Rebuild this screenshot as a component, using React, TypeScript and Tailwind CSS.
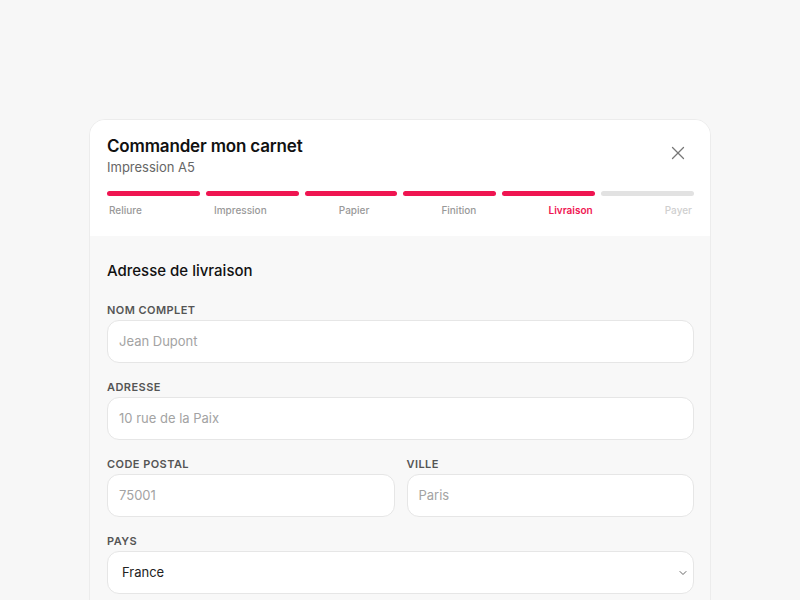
import { X, ChevronDown } from 'lucide-react';

const STEPS = ['Reliure', 'Impression', 'Papier', 'Finition', 'Livraison', 'Payer'];
const CURRENT = 4;

function Field({ label, placeholder }: { label: string; placeholder: string }) {
  return (
    <div className="flex flex-col">
      <label className="text-[11px] font-semibold tracking-[0.04em] text-[#555] leading-[14px] mb-[3px]">
        {label}
      </label>
      <div className="h-[43px] rounded-xl border border-[#e6e6e6] bg-white flex items-center pl-[11px]">
        <span className="text-[13px] text-[#a3a3a3]">{placeholder}</span>
      </div>
    </div>
  );
}

export default function App() {
  return (
    <div
      className="h-[600px] overflow-hidden bg-[#f7f7f7] pt-[119px] flex justify-center"
      style={{ fontFamily: 'Inter, "Noto Sans", sans-serif' }}
    >
      <div className="w-[622px] rounded-t-2xl border border-[#ececec] bg-[#f8f8f8] overflow-hidden self-start h-[520px]">
        {/* Header */}
        <div className="bg-white pl-[17px] pr-[16px] pt-[14px] pb-[19px]">
          <div className="flex justify-between items-start">
            <div>
              <h1 className="text-[17px] font-semibold text-[#111] leading-6 tracking-[-0.01em]">Commander mon carnet</h1>
              <p className="text-[13px] text-[#666] leading-5 -mt-[1px]">Impression A5</p>
            </div>
            <button className="mt-[8px] mr-[5px] text-[#777]">
              <X size={22} strokeWidth={1.4} />
            </button>
          </div>
          <div className="flex gap-[6px] mt-[14px]">
            {STEPS.map((s, i) => (
              <div
                key={s}
                className={`flex-1 h-[5px] rounded-full ${i <= CURRENT ? 'bg-[#ef1551]' : 'bg-[#e2e2e2]'}`}
              />
            ))}
          </div>
          <div className="flex justify-between px-[2px] mt-[7px]">
            {STEPS.map((s, i) => (
              <span
                key={s}
                className={`text-[10px] font-medium leading-[14px] ${
                  i === CURRENT ? 'text-[#ef1551] font-semibold' : i > CURRENT ? 'text-[#cfcfcf]' : 'text-[#999]'
                }`}
              >
                {s}
              </span>
            ))}
          </div>
        </div>

        {/* Body */}
        <div className="pl-[17px] pr-[16px] pt-[25px]">
          <h2 className="text-[15px] font-medium text-[#111] leading-5 mb-[22px]">Adresse de livraison</h2>
          <div className="flex flex-col gap-[17px]">
            <Field label="NOM COMPLET" placeholder="Jean Dupont" />
            <Field label="ADRESSE" placeholder="10 rue de la Paix" />
            <div className="grid grid-cols-2 gap-3">
              <Field label="CODE POSTAL" placeholder="75001" />
              <Field label="VILLE" placeholder="Paris" />
            </div>
            <div className="flex flex-col">
              <label className="text-[11px] font-semibold tracking-[0.04em] text-[#555] leading-[14px] mb-[3px]">
                PAYS
              </label>
              <div className="h-[43px] rounded-xl border border-[#e6e6e6] bg-white flex items-center justify-between pl-[14px] pr-[4px]">
                <span className="text-[13px] text-[#222]">France</span>
                <ChevronDown size={12} className="text-[#666]" />
              </div>
            </div>
          </div>
        </div>
      </div>
    </div>
  );
}
